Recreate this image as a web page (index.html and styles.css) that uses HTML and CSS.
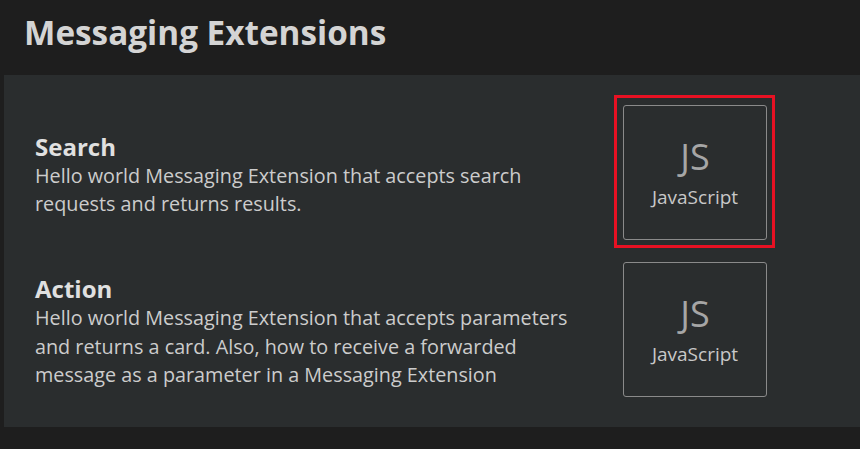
FILE: index.html
```html
<!DOCTYPE html>
<html>
<head>
<meta charset="utf-8">
<link rel="stylesheet" href="styles.css">
</head>
<body>
<h1 class="title">Messaging Extensions</h1>
<section class="panel">
  <div class="row">
    <div class="info">
      <h2 class="name">Search</h2>
      <p class="desc">Hello world Messaging Extension that accepts search requests and returns results.</p>
    </div>
    <div class="card selected">
      <span class="abbr">JS</span>
      <span class="lang">JavaScript</span>
    </div>
  </div>
  <div class="row">
    <div class="info">
      <h2 class="name">Action</h2>
      <p class="desc">Hello world Messaging Extension that accepts parameters and returns a card. Also, how to receive a forwarded message as a parameter in a Messaging Extension</p>
    </div>
    <div class="card">
      <span class="abbr">JS</span>
      <span class="lang">JavaScript</span>
    </div>
  </div>
</section>
</body>
</html>
```
FILE: styles.css
```css
html, body {
  margin: 0;
  padding: 0;
  background: #1e1e1e;
  font-family: "Open Sans", "Noto Sans", sans-serif;
  color: #cccccc;
}
.title {
  margin: 0;
  padding: 10px 24px 0 24px;
  height: 75px;
  box-sizing: border-box;
  font-size: 33.3px;
  line-height: 44px;
  font-weight: 700;
  color: #d4d4d4;
}
.panel {
  margin-left: 4px;
  background: #2a2d2e;
  padding: 30px 93px 30px 31px;
  display: flex;
  flex-direction: column;
  gap: 22px;
}
.row {
  display: grid;
  grid-template-columns: 1fr 144px;
  column-gap: 30px;
  align-items: center;
}
.info {
  padding-top: 5px;
}
.name {
  margin: 0;
  font-size: 24px;
  line-height: 30px;
  font-weight: 700;
  color: #e0e0e0;
}
.desc {
  margin: 0;
  font-size: 19.8px;
  line-height: 28.5px;
  color: #cccccc;
  max-width: 550px;
}
.card {
  position: relative;
  width: 144px;
  height: 135px;
  box-sizing: border-box;
  border: 1px solid #8a8a8a;
  border-radius: 3px;
  display: flex;
  flex-direction: column;
  align-items: center;
  justify-content: center;
  gap: 6px;
}
.card.selected::before {
  content: "";
  position: absolute;
  top: -11px;
  left: -10px;
  right: -9px;
  bottom: -9px;
  border: 3px solid #e81123;
}
.abbr {
  font-size: 36px;
  font-weight: 400;
  line-height: 42px;
  color: #a6a6a6;
}
.lang {
  font-size: 19px;
  line-height: 26px;
  color: #c8c8c8;
}
```
